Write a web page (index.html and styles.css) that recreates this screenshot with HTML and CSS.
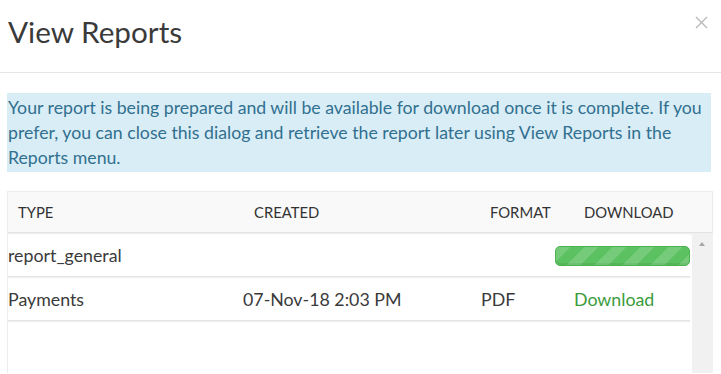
FILE: index.html
```html
<!DOCTYPE html>
<html lang="en">
<head>
  <meta charset="UTF-8" />
  <title>View Reports</title>
  <link rel="stylesheet" href="styles.css">
</head>
<body>
  <div class="modal-header">
    <h2>View Reports</h2>
    <button class="close" aria-label="Close">
      <svg width="13" height="13" viewBox="0 0 13 13"><path d="M1 1 L12 12 M12 1 L1 12" stroke="#b9b9b9" stroke-width="1.4" fill="none"/></svg>
    </button>
  </div>

  <div class="modal-body">
    <div class="alert">
      Your report is being prepared and will be available for download once it is complete. If you<br>
      prefer, you can close this dialog and retrieve the report later using View Reports in the<br>
      Reports menu.
    </div>

    <div class="report-table">
      <div class="table-head">
        <div>Type</div>
        <div>Created</div>
        <div>Format</div>
        <div>Download</div>
      </div>
      <div class="table-scroll">
        <div class="rows">
          <div class="row">
            <div>report_general</div>
            <div></div>
            <div></div>
            <div><div class="progress"></div></div>
          </div>
          <div class="row">
            <div>Payments</div>
            <div>07-Nov-18 2:03 PM</div>
            <div>PDF</div>
            <div><a class="download" href="#">Download</a></div>
          </div>
        </div>
        <div class="scrollbar"><span class="arrow-up"></span></div>
      </div>
    </div>
  </div>
</body>
</html>
```

FILE: styles.css
```css
body {
  margin: 0;
  font-family: Lato, "Open Sans", sans-serif;
  color: #333;
  background: #fff;
  overflow: hidden;
}

.modal-header {
  display: flex;
  justify-content: space-between;
  align-items: flex-start;
  height: 72px;
  padding: 0 8px 0 8px;
  border-bottom: 1px solid #e5e5e5;
}

.modal-header h2 {
  margin: 0;
  padding-top: 14px;
  font-size: 29.7px;
  font-weight: 400;
  line-height: 36px;
  color: #3a3a3a;
}

.close {
  background: none;
  border: none;
  padding: 0;
  margin: 16px 5px 0 0;
  cursor: pointer;
}

.modal-body {
  padding: 20px 10px 0 7px;
}

.alert {
  background-color: #d9edf7;
  color: #31708f;
  font-size: 17.7px;
  line-height: 25px;
  padding: 2px 0 2px 1px;
  white-space: nowrap;
}

.report-table {
  margin-top: 19px;
  border: 1px solid #ececec;
  border-right: none;
  border-bottom: none;
  margin-right: -2px;
}

.table-head {
  display: grid;
  grid-template-columns: 236px 236px 94px 1fr;
  height: 40px;
  align-items: center;
  background-color: #f9f9f9;
  border-bottom: 1px solid #e3e3e3;
  box-shadow: 0 1px 1px #eee;
  font-size: 14.8px;
  text-transform: uppercase;
  border-right: 1px solid #ececec;
}

.table-head div {
  padding-left: 10px;
}

.table-scroll {
  display: flex;
  height: 140px;
}

.rows {
  flex: 1;
}

.row {
  display: grid;
  grid-template-columns: 235px 238px 74px 1fr;
  height: 43px;
  align-items: center;
  border-bottom: 1px solid #e3e3e3;
  box-shadow: 0 1px 1px #f0f0f0;
  font-size: 17.8px;
  color: #3a3a3a;
}

.progress {
  height: 18px;
  border: 1px solid #4cb44f;
  border-radius: 5px;
  background-color: #5cc160;
  background-image: linear-gradient(135deg, rgba(255,255,255,.16) 25%, transparent 25%, transparent 50%, rgba(255,255,255,.16) 50%, rgba(255,255,255,.16) 75%, transparent 75%, transparent);
  background-size: 28px 28px;
  box-shadow: inset 0 -2px 0 rgba(0,0,0,.06);
  margin-top: 3px;
}

.download {
  display: block;
  padding-left: 19px;
  color: #3b9b3b;
  text-decoration: none;
}

.scrollbar {
  width: 21px;
  margin-left: 2px;
  background-color: #f1f1f1;
  position: relative;
}

.arrow-up {
  position: absolute;
  top: 9px;
  left: 7px;
  border-left: 3px solid transparent;
  border-right: 3px solid transparent;
  border-bottom: 4px solid #a6a6a6;
}
```
